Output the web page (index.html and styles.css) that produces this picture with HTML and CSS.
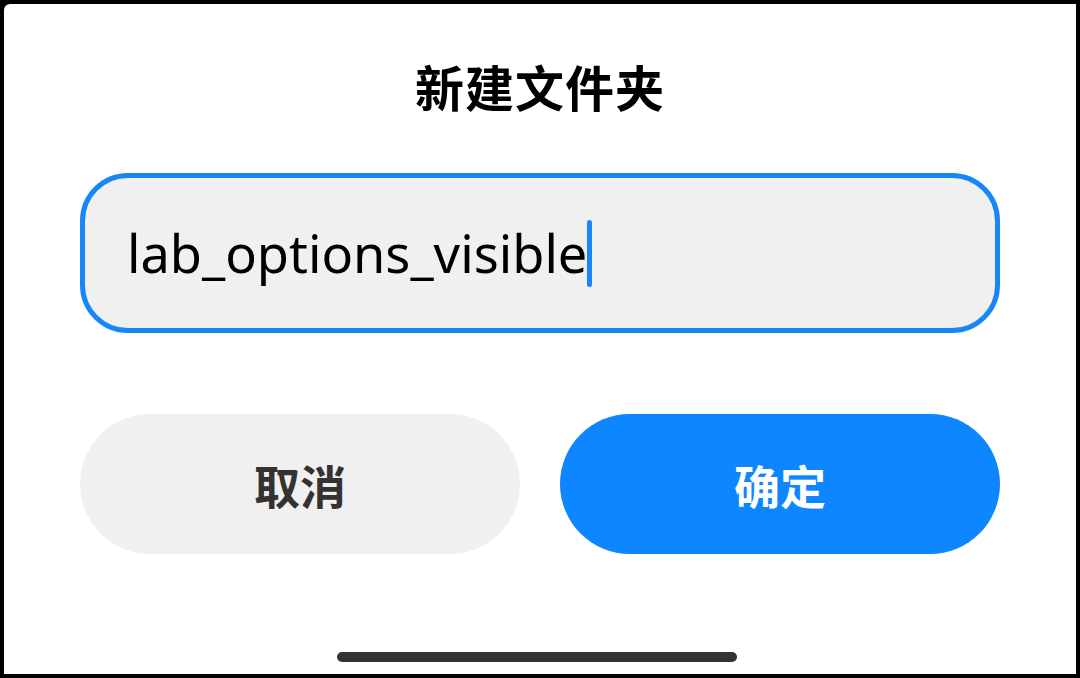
FILE: index.html
```html
<!DOCTYPE html>
<html lang="zh-CN">
<head>
<meta charset="utf-8">
<title>新建文件夹</title>
<link rel="stylesheet" href="styles.css">
</head>
<body>
<div class="screen">
  <h1 class="title">新建文件夹</h1>
  <div class="field">
    <span class="value">lab_options_visible</span><span class="caret"></span>
  </div>
  <div class="actions">
    <button class="btn btn-cancel">取消</button>
    <button class="btn btn-ok">确定</button>
  </div>
  <div class="home-bar"></div>
</div>
</body>
</html>
```
FILE: styles.css
```css
html, body {
  margin: 0;
  padding: 0;
}
body {
  background: #000;
  padding: 4px;
  width: 1080px;
  height: 678px;
  box-sizing: border-box;
  overflow: hidden;
  font-family: "Noto Sans", "Noto Sans CJK SC", sans-serif;
}
.screen {
  height: 670px;
  background: #fff;
  border-top-left-radius: 6px;
  display: flex;
  flex-direction: column;
  padding: 0 76px;
  box-sizing: border-box;
}
.title {
  margin: 50px 0 0;
  height: 64px;
  line-height: 64px;
  text-align: center;
  font-family: "Noto Sans CJK SC", sans-serif;
  font-weight: 700;
  font-size: 49px;
  letter-spacing: 1px;
  color: #000;
}
.field {
  margin-top: 55px;
  height: 160px;
  box-sizing: border-box;
  border: 5px solid #1787f7;
  border-radius: 48px;
  background: #f0f0f0;
  display: flex;
  align-items: center;
  padding-left: 42px;
}
.value {
  font-family: "Noto Sans", sans-serif;
  font-size: 52.3px;
  color: #000;
  line-height: 1;
}
.caret {
  width: 5px;
  height: 67px;
  border-radius: 3px;
  background: #1787f7;
  margin-left: 0;
}
.actions {
  margin-top: 81px;
  display: flex;
  gap: 40px;
}
.btn {
  flex: 1;
  height: 140px;
  border: none;
  border-radius: 70px;
  font-family: "Noto Sans CJK SC", sans-serif;
  font-weight: 700;
  font-size: 46px;
  padding: 0;
}
.btn-cancel {
  background: #f0f0f0;
  color: #333;
}
.btn-ok {
  background: #0d86ff;
  color: #fff;
}
.home-bar {
  margin-top: 98px;
  margin-left: 257px;
  width: 400px;
  height: 10px;
  border-radius: 5px;
  background: #333;
}
```
